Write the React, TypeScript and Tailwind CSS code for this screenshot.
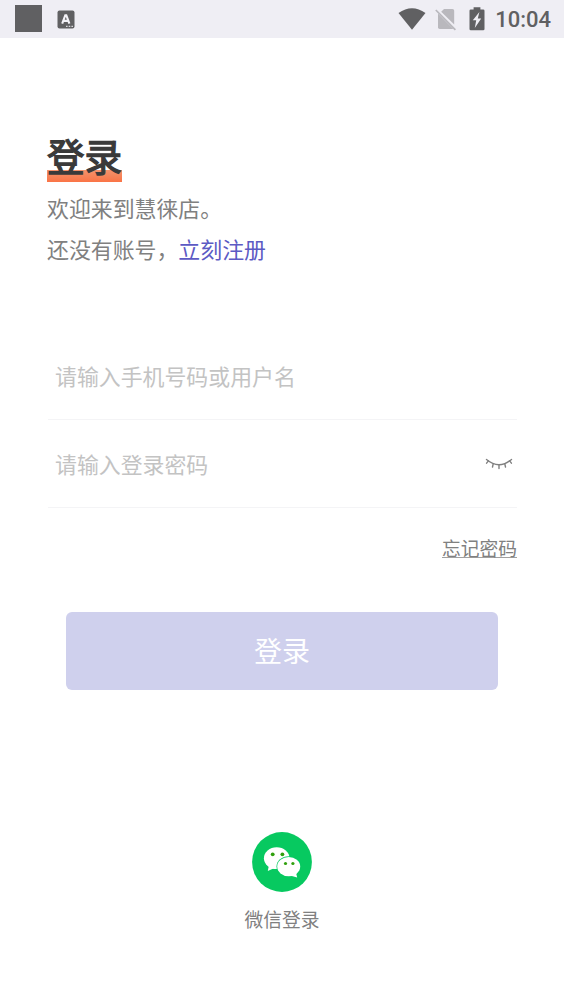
import { useState } from 'react';

// Android style status bar
function StatusBar() {
  return (
    <header className="flex h-[38px] items-center bg-[#efeef4] pl-[15px] pr-[13px] text-[#606062]">
      <div className="mb-px h-[27px] w-[27px] bg-[#606062]" />
      <svg className="ml-[15px]" width="18" height="19" viewBox="0 0 18 19">
        <rect x="0.5" y="0.5" width="17" height="18" rx="2" fill="#606062" />
        <path d="M5.2 13.6 L8.3 5.2 H9.3 L12.400 13.600 M6.600 10.900 H11" fill="none" stroke="#f3f2f7" strokeWidth="2.1" />
        <path d="M9 16.4h1.6M11.7 16.4h1.6M14.4 16.4H16" stroke="#d8d8dc" strokeWidth="1.2" />
      </svg>

      <div className="ml-auto flex items-center">
        {/* Wifi */}
        <svg width="28" height="22" viewBox="0 0 28 22">
          <path d="M0.5 5 Q14 -4.6 27.5 5 L14 21.8 Z" fill="#606062" />
        </svg>
        {/* No SIM */}
        <svg className="ml-[9px]" width="22" height="24" viewBox="0 0 22 24">
          <path d="M9 2 H17.5 Q19.2 2 19.2 3.7 V17.6 L6.2 4.8 Z" fill="#b9b8bd" />
          <path d="M3 6.6 L18.4 22 H4.7 Q3 22 3 20.3 Z" fill="#b9b8bd" />
          <path d="M0.8 3 L20.4 22.9" stroke="#b9b8bd" strokeWidth="1.7" />
        </svg>
        {/* Battery */}
        <svg className="ml-3" width="16" height="24" viewBox="0 0 16 24">
          <path d="M4.6 0.3h6.8v2.2h2.8q1.3 0 1.3 1.3v18.2q0 1.3-1.3 1.3H1.8q-1.3 0-1.3-1.3V3.8q0-1.3 1.3-1.3h2.8z" fill="#606062" />
          <path d="M10.4 5 L3.8 13.2 H7.2 L5.8 21 L12.2 11.4 H8.8 Z" fill="#efeef4" />
        </svg>
        <span className="ml-[10px] pt-0.5 font-['Roboto',sans-serif] text-[22px] font-medium leading-9">10:04</span>
      </div>
    </header>
  );
}

function ClosedEyeIcon() {
  return (
    <svg width="28" height="12" viewBox="0 0 28 12" fill="none" stroke="#808080" strokeWidth="1.4" strokeLinecap="round">
      <path d="M1.5 1.5 Q14 12 26.5 1.5" />
      <path d="M3.4 2.8 L1.6 5.2M8.2 5.8 L7.5 9M14 6.9 V10.6M19.8 5.8 L20.5 9M24.6 2.8 L26.4 5.2" />
    </svg>
  );
}

function WechatIcon() {
  return (
    <svg width="60" height="60" viewBox="0 0 60 60">
      <circle cx="30" cy="30" r="29.9" fill="#07c960" />
      {/* Large bubble */}
      <g fill="#fff">
        <ellipse cx="24.7" cy="26.2" rx="12.8" ry="10.9" />
        <path d="M17 33 L15.8 39 L23 35.8 Z" />
      </g>
      {/* Small bubble */}
      <ellipse cx="36.7" cy="34.6" rx="12.2" ry="10.3" fill="#07c960" />
      <g fill="#fff">
        <ellipse cx="36.7" cy="34.6" rx="11.5" ry="9.6" />
        <path d="M38 43.4 L45.2 45.6 L43.8 40 Z" />
      </g>
      <g fill="#31a00d">
        <circle cx="20.7" cy="22.3" r="1.9" />
        <circle cx="30.4" cy="22.3" r="1.9" />
        <circle cx="33.5" cy="31.5" r="1.6" />
        <circle cx="40.9" cy="31.5" r="1.6" />
      </g>
    </svg>
  );
}

export default function App() {
  const [account, setAccount] = useState('');
  const [password, setPassword] = useState('');

  return (
    <div className="flex h-[1002px] w-[564px] flex-col overflow-hidden bg-white font-['Noto_Sans_CJK_SC',sans-serif] text-[#808080]">
      <StatusBar />

      <main className="flex flex-col px-[47px] pt-24">
        <h1 className="h-12 w-[75px] whitespace-nowrap bg-[linear-gradient(#f3936d,#fa7446)] bg-[length:100%_12px] bg-bottom bg-no-repeat text-[37.5px] font-normal leading-[42px] text-[#3a3a3a] [-webkit-text-stroke:1.3px_#3a3a3a]">
          登录
        </h1>
        <div className="mt-[5px] text-[21.9px] leading-[41px]">
          <p>欢迎来到慧徕店。</p>
          <p>
            还没有账号，<a href="#" className="text-[#5c5ac4]">立刻注册</a>
          </p>
        </div>

        <form className="mt-[63px] flex flex-col" onSubmit={(e) => e.preventDefault()}>
          <div className="ml-px flex h-[88px] items-center border-b border-[#f4f4f6] pl-[7px]">
            <input
              className="w-full pt-0.5 text-[21.9px] outline-none placeholder:text-[#c3c3c3]"
              placeholder="请输入手机号码或用户名"
              value={account}
              onChange={(e) => setAccount(e.target.value)}
            />
          </div>
          <div className="ml-px flex h-[88px] items-center border-b border-[#f4f4f6] pl-[7px] pr-1">
            <input
              type="password"
              className="min-w-0 flex-1 pt-0.5 text-[21.9px] outline-none placeholder:text-[#c3c3c3]"
              placeholder="请输入登录密码"
              value={password}
              onChange={(e) => setPassword(e.target.value)}
            />
            <ClosedEyeIcon />
          </div>

          <a
            href="#"
            className="mt-[26px] self-end text-[18.75px] leading-7 underline decoration-[#a0a0a0] decoration-1 underline-offset-1"
          >
            忘记密码
          </a>

          <button
            type="submit"
            className="mx-[19px] mt-[49.5px] h-[78px] rounded-md bg-[#cfd0ed] pb-0.5 text-[28px] leading-none text-white"
          >
            登录
          </button>
        </form>
      </main>

      <div className="mt-[142.5px] flex flex-col items-center">
        <WechatIcon />
        <span className="mt-[13px] text-[18.75px] leading-7">微信登录</span>
      </div>
    </div>
  );
}
